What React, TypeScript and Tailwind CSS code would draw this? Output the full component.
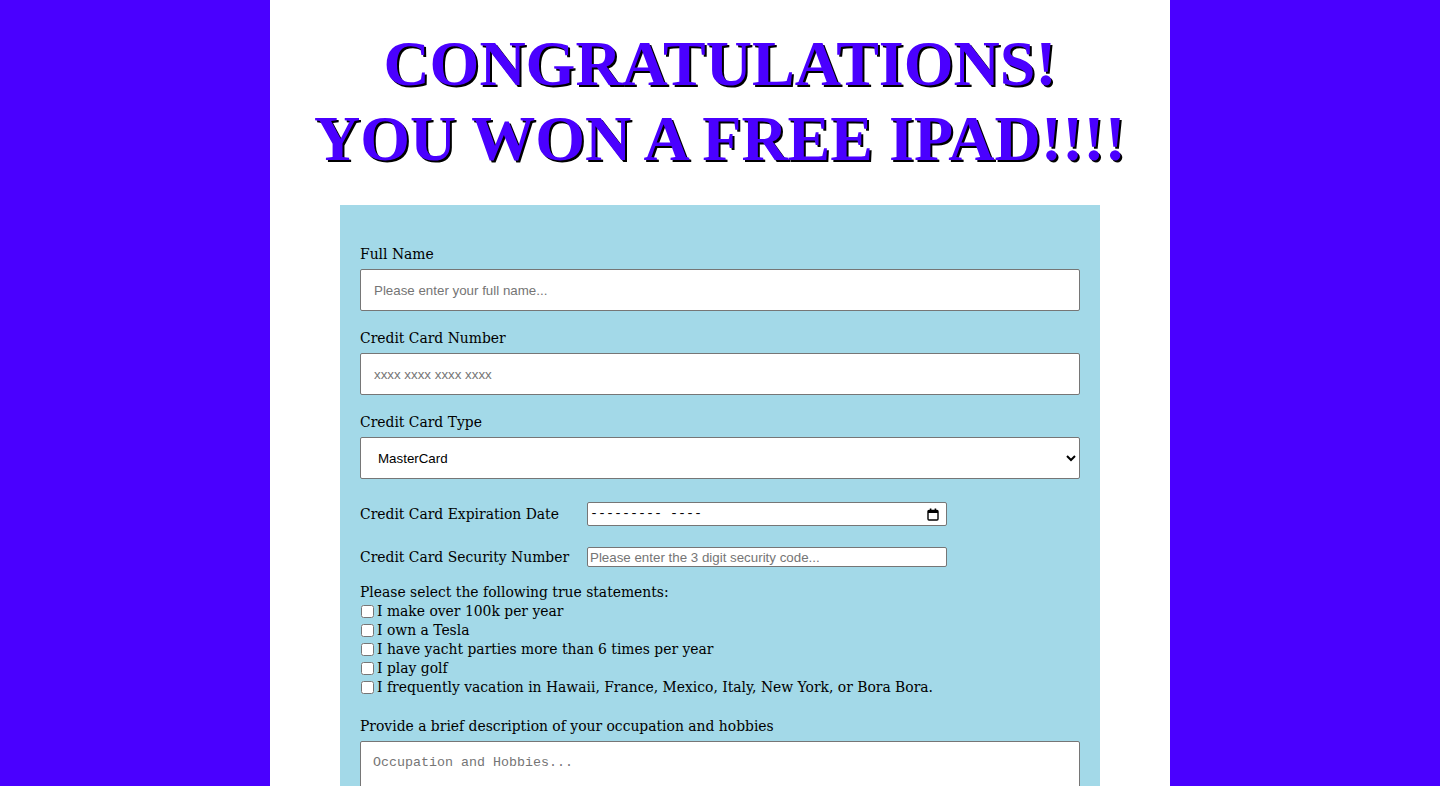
export default function App() {
  const statements = [
    "I make over 100k per year",
    "I own a Tesla",
    "I have yacht parties more than 6 times per year",
    "I play golf",
    "I frequently vacation in Hawaii, France, Mexico, Italy, New York, or Bora Bora.",
  ];

  return (
    <div className="min-h-screen bg-[#4a00ff]">
      <div className="mx-auto min-h-screen w-[900px] bg-white pb-10">
        <h1 className="pt-[26px] text-center font-['Liberation_Serif',serif] text-[64px] font-bold leading-[75px] text-[#4a00ff] [text-shadow:2px_2px_0_#000]">
          CONGRATULATIONS!
          <br />
          YOU WON A FREE IPAD!!!!
        </h1>

        <form className="mx-auto mt-[29px] flex w-[760px] flex-col bg-[#a3d9e8] px-5 pb-10 pt-[39px] font-['DejaVu_Serif',serif] text-[13.9px] text-black">
          <label className="mb-[5px] leading-5">Full Name</label>
          <input
            type="text"
            placeholder="Please enter your full name..."
            className="h-[42px] w-full rounded-[2px] border border-[#767676] bg-white px-[13px] font-['Liberation_Sans',sans-serif] text-[13.33px] placeholder:text-[#757575]"
          />

          <label className="mb-[5px] mt-[17px] leading-5">Credit Card Number</label>
          <input
            type="text"
            placeholder="xxxx xxxx xxxx xxxx"
            className="h-[42px] w-full rounded-[2px] border border-[#767676] bg-white px-[13px] font-['Liberation_Sans',sans-serif] text-[13.33px] placeholder:text-[#757575]"
          />

          <label className="mb-[5px] mt-[17px] leading-5">Credit Card Type</label>
          <select
            defaultValue="MasterCard"
            className="h-[42px] w-full rounded-[2px] border border-[#767676] bg-white pl-[13px] pr-2 font-['Liberation_Sans',sans-serif] text-[13.33px]"
          >
            <option>Visa</option>
            <option>MasterCard</option>
            <option>American Express</option>
            <option>Discover</option>
          </select>

          <div className="mt-[23px] flex h-[24px] items-center">
            <label className="w-[227px]">Credit Card Expiration Date</label>
            <div className="flex h-[24px] w-[360px] items-center justify-between rounded-[2px] border border-[#767676] bg-white pl-[2px] pr-[7px]">
              <span className="whitespace-pre font-['Liberation_Mono',monospace] text-[13.33px] leading-none">
                {"--------- ----"}
              </span>
              <svg width="12" height="13" viewBox="0 0 12 13" fill="none">
                <rect x="1" y="2.5" width="10" height="9.5" rx="1" stroke="#000" strokeWidth="1.4" />
                <rect x="1" y="2.5" width="10" height="2.5" fill="#000" />
                <rect x="2.8" y="0.5" width="1.6" height="3" fill="#000" />
                <rect x="7.6" y="0.5" width="1.6" height="3" fill="#000" />
              </svg>
            </div>
          </div>

          <div className="mt-[21px] flex h-[20px] items-center">
            <label className="w-[227px]">Credit Card Security Number</label>
            <input
              type="text"
              placeholder="Please enter the 3 digit security code..."
              className="h-[20px] w-[360px] rounded-[2px] border border-[#767676] bg-white px-[2px] font-['Liberation_Sans',sans-serif] text-[13.33px] placeholder:text-[#757575]"
            />
          </div>

          <div className="mt-[16px] flex flex-col leading-[19px]">
            <p>Please select the following true statements:</p>
            {statements.map((s) => (
              <label key={s} className="flex items-center">
                <input type="checkbox" className="ml-[1px] mr-[3px] h-[13px] w-[13px]" />
                {s}
              </label>
            ))}
          </div>

          <label className="mb-[5px] mt-[19px] leading-5">
            Provide a brief description of your occupation and hobbies
          </label>
          <textarea
            placeholder="Occupation and Hobbies..."
            className="h-[150px] w-full rounded-[2px] border border-[#767676] bg-white px-[12px] py-[11px] font-['Liberation_Mono',monospace] text-[13.33px] placeholder:text-[#757575]"
          />

          <button
            type="submit"
            className="mt-5 self-start rounded-[2px] border border-[#767676] bg-[#efefef] px-4 py-1 font-['Liberation_Sans',sans-serif] text-[13.33px]"
          >
            Claim my iPad
          </button>
        </form>
      </div>
    </div>
  );
}
